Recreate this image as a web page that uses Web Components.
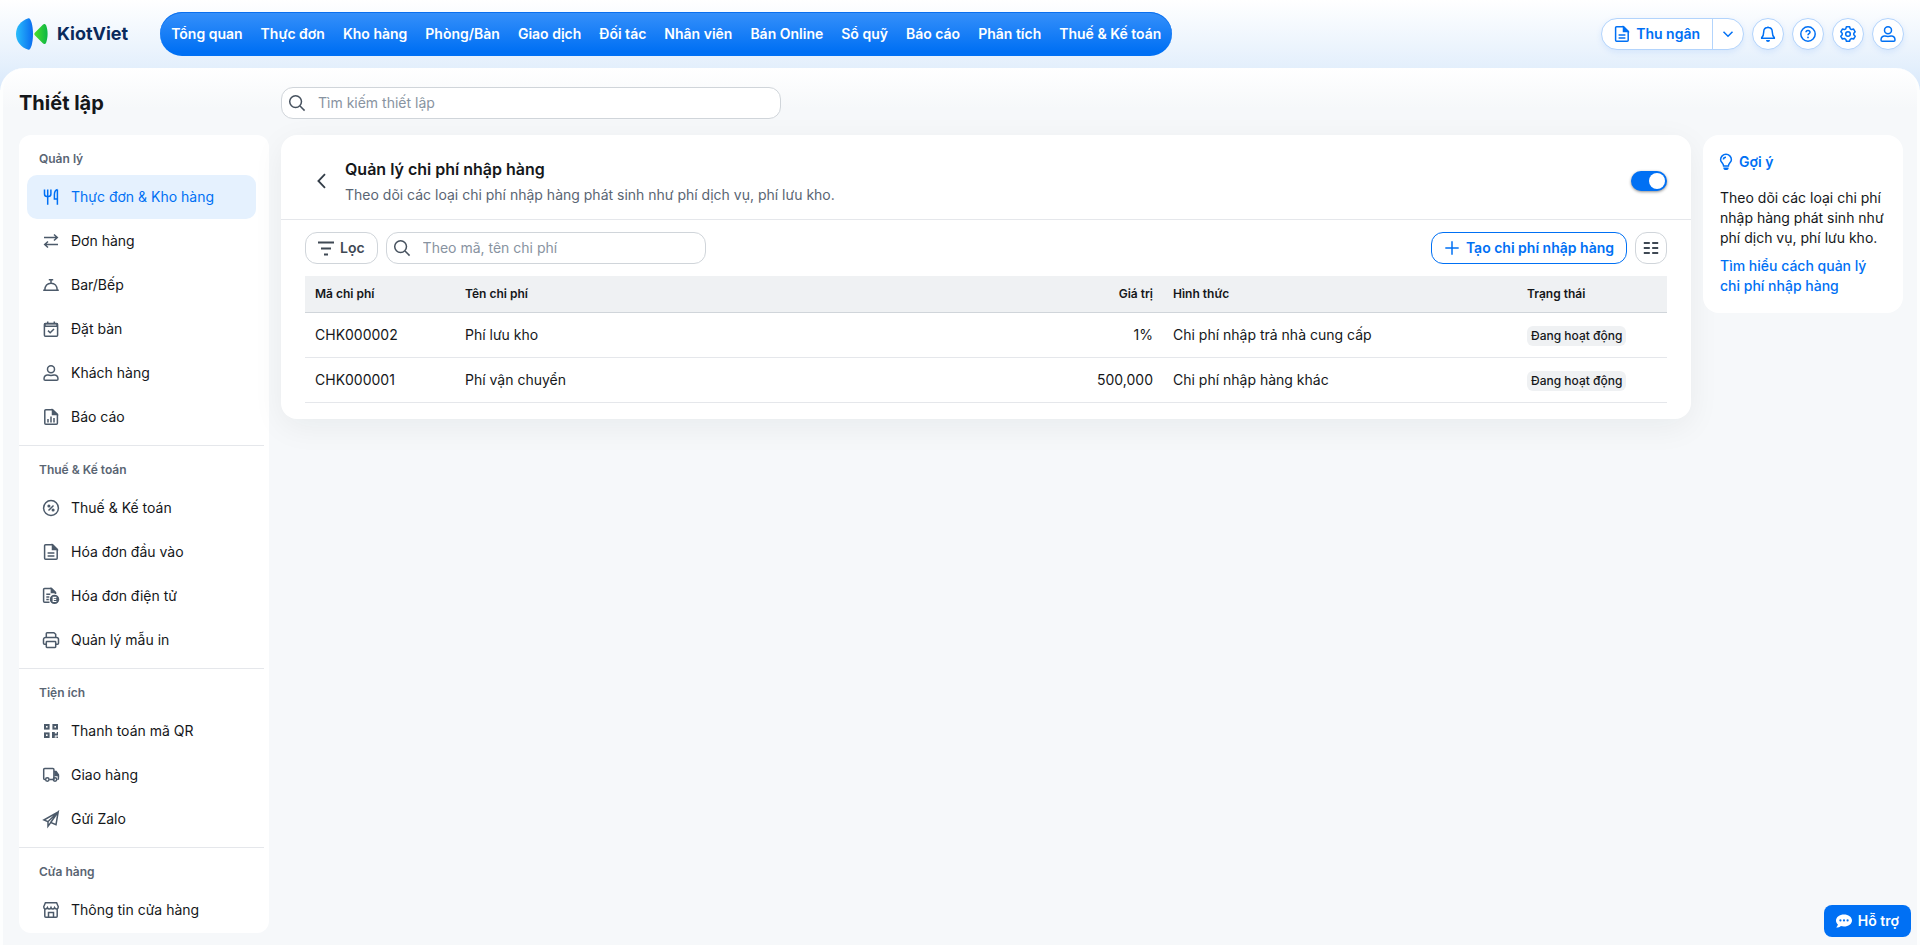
<!DOCTYPE html>
<html lang="vi">
<head>
<meta charset="utf-8">
<meta name="viewport" content="width=device-width, initial-scale=1">
<title>KiotViet - Thiết lập</title>
<style>
  :root {
    --blue: #0070f4;
    --blue-soft: #e5f1fe;
    --ink: #15171a;
    --muted: #4c5a6a;
    --line: #e5e7eb;
    --line-strong: #d0d5da;
    --surface: #f6f8fa;
    --head: #eff1f3;
  }
  html { height: 100%; }
  body {
    margin: 0;
    height: 100%;
    overflow: hidden;
    font: 14px/20px Inter, "Noto Sans", sans-serif;
    color: var(--ink);
    background: #fff;
  }
</style>
</head>
<body>
<kv-app></kv-app>

<script>
const ICONS = {
  doc: '<path d="M2.600.8h7L14.200 5.400V14.200a1 1 0 0 1-1 1H2.600a1 1 0 0 1-1-1V1.800a1 1 0 0 1 1-1z"/><path d="M9.500 1v4.500H14z" fill="currentColor"/><path d="M4.600 9h6.800M4.600 12h6.800"/>',
  chevdown: '<path d="M3.500 5.800L8 10.300l4.500-4.500"/>',
  bell: '<path d="M8 1.600c-2.700 0-4.300 2-4.300 4.500 0 3-.8 4.400-2 5.500v.7h12.600v-.7c-1.200-1.100-2-2.500-2-5.500 0-2.500-1.600-4.500-4.300-4.500zM8 .4v1"/><path d="M6 14h4a2 2 0 0 1-4 0z" fill="currentColor" stroke="none"/>',
  help: '<circle cx="8" cy="8" r="7.200"/><path d="M6 6.300C6 5 6.900 4.400 8 4.400s2 .7 2 1.800c0 1.500-2 1.500-2 3"/><circle cx="8" cy="11.400" r=".9" fill="currentColor" stroke="none"/>',
  gear: '<path d="M6.400.8h3.200l.6 2 1.400.8 2-.5 1.600 2.700-1.400 1.500v1.500l1.400 1.500-1.600 2.700-2-.5-1.400.8-.6 2H6.400l-.6-2-1.400-.8-2 .5L.8 10.300l1.400-1.500V7.300L.8 5.800l1.600-2.700 2 .5 1.400-.8z" stroke-linejoin="round"/><circle cx="8" cy="8" r="2.300"/>',
  user: '<circle cx="8" cy="4.300" r="3.500"/><path d="M1 13.900c0-2.700 1.700-4.100 4-3.900 1.800.5 4.200.5 6 0 2.300-.2 4 1.200 4 3.900 0 .7-.5 1.300-1.200 1.300H2.200c-.7 0-1.200-.6-1.200-1.300z"/>',
  utensils: '<path d="M1.500.4v4.600c0 1.500 1 2.500 2.500 2.500h1.400c1.500 0 2.500-1 2.500-2.500V.4M4.700.4v15.400M14.400.6c-2 .5-3 2.800-3 5.200v4.300h2.700M14.400.6v15.200"/>',
  swap: '<path d="M1 4.500h13M11 1.500l3.300 3-3.300 3M15 11.500H2M5 8.500l-3.300 3 3.300 3"/>',
  cloche: '<path d="M.2 13.300h15.600M1.800 13c0-4 2.600-6.800 6.200-6.800s6.200 2.800 6.200 6.800M8 6.300V3.200M5.800 2.800h4.400"/>',
  calendar: '<rect x="1.400" y="2.400" width="13.200" height="12.800" rx="1"/><path d="M2 2.800h12v2.400H2zM4.700.4v2M11.300.4v2"/><path d="M5 9.600l2.200 2.200 3.800-3.800"/>',
  report: '<path d="M2.800.8h6.800L14.400 5.400V14.200a1 1 0 0 1-1 1H2.800a1 1 0 0 1-1-1V1.800a1 1 0 0 1 1-1z"/><path d="M9.500 1v4.500H14z" fill="currentColor"/><path d="M5 10v3.400M8 7.500v5.900M11 9v4.400"/>',
  percent: '<circle cx="8" cy="8" r="7.400"/><path d="M5.500 10.500l5-5"/><circle cx="5.900" cy="6" r=".8" fill="currentColor"/><circle cx="10.100" cy="10" r=".8" fill="currentColor"/>',
  einvoice: '<path d="M6.500 14.300H1.600a1 1 0 0 1-1-1V1.600a1 1 0 0 1 1-1h6.900l3.900 3.800V6"/><path d="M8.400.8v3.800H12z" fill="currentColor"/><path d="M3.300 6.300h4M3.300 9h3M3.300 11.500h2.500"/><circle cx="11.500" cy="11.400" r="4.700" fill="currentColor" stroke="none"/><path d="M13.400 9.300H10.200v4.200h3.200M10.200 11.400h3" stroke="#fff" stroke-width="1.200"/>',
  printer: '<path d="M3.300 5V1.500a.8.8 0 0 1 .8-.8h6.800l1.800 1.600V5M3.300 12.200H1.500a1 1 0 0 1-1-1V7.500A2 2 0 0 1 2.500 5.500h11a2 2 0 0 1 2 2V11.200a1 1 0 0 1-1 1h-1.800"/><rect x="3.300" y="9.600" width="9.400" height="5.800" rx=".6"/>',
  qr: '<g stroke-width="2"><rect x="2" y="2" width="3.600" height="3.600"/><rect x="10.400" y="2" width="3.600" height="3.600"/><rect x="2" y="10.400" width="3.600" height="3.600"/></g><path d="M9 9h2.800v1.600h2V9H15v3.400h-3.200V15H9zM12.600 13.600h1V15h-1zM14 13.600h1V15h-1z" fill="currentColor" stroke="none"/>',
  truck: '<path d="M2.200 12.500H1.700a1 1 0 0 1-1-1V2.500a1 1 0 0 1 1-1h8.200a1 1 0 0 1 1 1v10H6.300M10.900 4.500h2.200l2.300 3.200v3.800a1 1 0 0 1-1 1"/><path d="M12 5.800h1l2 2.800h-3z" fill="currentColor"/><circle cx="4.300" cy="12.500" r="1.700"/><circle cx="12" cy="12.500" r="1.700"/>',
  send: '<path d="M15.200.9L.9 9l4 1.700L15.200.9 13 13.700l-5.300-2.200zM5 10.700v4.500l2.700-3.600"/>',
  store: '<path d="M2.400.8h11.200l1.700 4c0 2.500-2.800 2.900-3.700.8-.8 2-2.800 2-3.600 0-.8 2-2.800 2-3.600 0C3.500 7.700.7 7.300.7 4.800zM1.800 7v7.200a1 1 0 0 0 1 1h10.400a1 1 0 0 0 1-1V7"/><path d="M5.500 15.200v-4.800h5v4.800"/>',
  search: '<circle cx="6.600" cy="6.600" r="5.900"/><path d="M11 11l4.600 4.600"/>',
  back: '<path d="M12 1.200L5.400 8l6.600 6.800" stroke-width="1.800"/>',
  filter: '<path d="M0 2.500h16M3 8.500h10M6 14.500h4" stroke-width="1.800"/>',
  plus: '<path d="M8 1.300v13.400M1.300 8h13.400"/>',
  columns: '<path d="M.8 3h6M9.200 3h6M.8 8h6M9.200 8h6M.8 13h6M9.200 13h6" stroke-width="2"/>',
  bulb: '<path d="M5.600 12c0-2.700-3-3.600-3-6.300a5.400 5.400 0 0 1 10.800 0c0 2.700-3 3.600-3 6.300zM5.400 5.600C5.400 4.200 6.400 3.200 8 3.200"/><path d="M5.400 13.600h5.200v.6c0 1-.8 1.800-2.600 1.800s-2.600-.8-2.600-1.800z" fill="currentColor" stroke="none"/>',
  chat: '<path d="M8 1.400c4.400 0 8 2.600 8 6s-3.600 6-8 6c-1.100 0-2.200-.2-3.100-.5-1.200.9-2.700 1.600-4.700 1.700 1-1 1.500-2.100 1.700-3.100C.8 10.400 0 9 0 7.400c0-3.400 3.600-6 8-6z" fill="currentColor" stroke="none"/><g fill="#0070f4" stroke="none"><circle cx="4.400" cy="7.400" r="1.100"/><circle cx="8" cy="7.400" r="1.100"/><circle cx="11.600" cy="7.400" r="1.100"/></g>'
};

const define = (name, html, setup) => {
  const tpl = document.createElement('template');
  tpl.innerHTML = html;
  customElements.define(name, class extends HTMLElement {
    constructor() {
      super();
      this.attachShadow({ mode: 'open' }).append(tpl.content.cloneNode(true));
    }
    connectedCallback() { if (setup) setup.call(this, this.shadowRoot); }
  });
};

define('kv-icon', `
  <style>
    :host { display: flex; justify-content: center; flex: none; width: 16px; height: 16px; }
    svg { display: block; flex: none; width: 16px; height: 16px; overflow: visible; }
  </style>
  <svg viewBox="0 0 16 16" fill="none" stroke="currentColor" stroke-width="1.500" aria-hidden="true"></svg>`,
  function (root) { root.querySelector('svg').innerHTML = ICONS[this.getAttribute('name')]; });

define('kv-logo', `
  <style>
    :host { display: block; flex: none; }
    a { display: flex; align-items: center; gap: 8px; text-decoration: none; color: #0a2a5c;
        font-size: 18px; line-height: 24px; font-weight: 700; }
    svg { display: block; width: 33px; height: 34px; }
  </style>
  <a href="#">
    <svg viewBox="0 0 33 34" aria-hidden="true">
      <defs>
        <linearGradient id="b"><stop offset="0" stop-color="#29bdfb"/><stop offset="1" stop-color="#0a6cf0"/></linearGradient>
        <linearGradient id="g"><stop offset="0" stop-color="#4be02a"/><stop offset="1" stop-color="#0cb546"/></linearGradient>
      </defs>
      <path d="M12.500 1.200c2.200-.6 4.500 6.800 4.500 15.800s-2.300 16.400-4.500 15.800C5 30.500 0 24.500 0 17S5 3.500 12.500 1.200z" fill="url(#b)"/>
      <path d="M18.800 15.800l8-8c1.200-1.200 2.600-1 3.400.8 1.900 4.800 1.900 12 0 16.800-.8 1.800-2.200 2-3.400.8l-8-8a1.700 1.700 0 0 1 0-2.400z" fill="url(#g)"/>
    </svg>
    KiotViet
  </a>`);

define('kv-nav', `
  <style>
    :host { display: block; }
    nav { display: flex; align-items: center; height: 44px; padding: 0 2px; border-radius: 22px; box-sizing: border-box;
          background: linear-gradient(#3690fa, #0070f4 90%); box-shadow: inset 0 1px #0a6fee; }
    a { padding: 0 9px; color: #fff; font-weight: 600; text-decoration: none; white-space: nowrap; }
  </style>
  <nav></nav>`,
  function (root) {
    root.querySelector('nav').innerHTML = ['Tổng quan', 'Thực đơn', 'Kho hàng', 'Phòng/Bàn', 'Giao dịch', 'Đối tác',
      'Nhân viên', 'Bán Online', 'Sổ quỹ', 'Báo cáo', 'Phân tích', 'Thuế &amp; Kế toán']
      .map(t => `<a href="#">${t}</a>`).join('');
  });

define('kv-round-button', `
  <style>
    :host { display: block; flex: none; }
    button { display: grid; place-items: center; width: 32px; height: 32px; padding: 0; box-sizing: border-box;
             border: 1px solid #b3d4fc; border-radius: 50%; background: #fff; color: var(--blue);
             box-shadow: 0 2px 6px rgba(0, 112, 244, .1); }
  </style>
  <button type="button"><slot></slot></button>`,
  function (root) { root.querySelector('button').setAttribute('aria-label', this.getAttribute('label')); });

define('kv-cashier', `
  <style>
    :host { display: flex; flex: none; box-sizing: border-box; height: 32px; border: 1px solid #b3d4fc; border-radius: 16px;
            background: #fff; box-shadow: 0 2px 6px rgba(0, 112, 244, .1); }
    button { display: flex; align-items: center; gap: 6px; margin: 0; padding: 0 12px; border: 0; background: none;
             color: var(--blue); font: inherit; font-weight: 600; }
    button + button { padding: 0 7px; border-left: 1px solid #b3d4fc; }
  </style>
  <button type="button"><kv-icon name="doc"></kv-icon>Thu ngân</button>
  <button type="button" aria-label="Mở danh sách"><kv-icon name="chevdown"></kv-icon></button>`);

define('kv-header', `
  <style>
    :host { display: flex; align-items: center; box-sizing: border-box; padding: 12px 16px; }
    kv-nav { margin-left: 32px; }
    .tools { display: flex; gap: 8px; margin-left: auto; }
  </style>
  <kv-logo></kv-logo>
  <kv-nav></kv-nav>
  <div class="tools">
    <kv-cashier></kv-cashier>
    <kv-round-button label="Thông báo"><kv-icon name="bell"></kv-icon></kv-round-button>
    <kv-round-button label="Trợ giúp"><kv-icon name="help"></kv-icon></kv-round-button>
    <kv-round-button label="Cài đặt"><kv-icon name="gear"></kv-icon></kv-round-button>
    <kv-round-button label="Tài khoản"><kv-icon name="user"></kv-icon></kv-round-button>
  </div>`);

define('kv-search', `
  <style>
    :host { display: block; }
    label { display: flex; align-items: center; gap: 13px; height: 32px; padding: 0 8px 0 7px; box-sizing: border-box;
            border: 1px solid var(--line-strong); border-radius: 12px; background: #fff; color: #46515e; }
    input { flex: 1; min-width: 0; padding: 0; border: 0; outline: 0; background: none; font: inherit; color: var(--ink); }
    input::placeholder { color: #8893a1; opacity: 1; }
  </style>
  <label><kv-icon name="search"></kv-icon><input type="text"></label>`,
  function (root) {
    const input = root.querySelector('input');
    input.placeholder = this.getAttribute('placeholder');
    input.setAttribute('aria-label', input.placeholder);
  });

define('kv-menu-item', `
  <style>
    :host { display: block; }
    a { display: flex; align-items: center; gap: 12px; height: 44px; padding: 0 16px; border-radius: 10px;
        color: inherit; text-decoration: none; }
    kv-icon { color: var(--muted); }
    :host([active]) a { background: var(--blue-soft); color: var(--blue); }
    :host([active]) kv-icon { color: var(--blue); }
  </style>
  <a href="#"><slot></slot></a>`,
  function (root) {
    root.querySelector('a').insertAdjacentHTML('afterbegin', `<kv-icon name="${this.getAttribute('icon')}"></kv-icon>`);
  });

define('kv-menu-group', `
  <style>
    :host { display: block; padding: 16px 8px 6px; border-bottom: 1px solid var(--line); }
    :host(:last-of-type) { padding-bottom: 0; border-bottom: 0; }
    h2 { margin: 0 0 8px; padding: 0 12px; font-size: 12px; line-height: 16px; font-weight: 600; color: #5a6573; }
  </style>
  <h2></h2>
  <slot></slot>`,
  function (root) { root.querySelector('h2').textContent = this.getAttribute('label'); });

define('kv-sidebar', `
  <style>
    :host { display: block; box-sizing: border-box; min-height: 0; overflow: hidden; padding-right: 5px;
            border-radius: 12px; background: #fff; }
  </style>
  <kv-menu-group label="Quản lý">
    <kv-menu-item icon="utensils" active>Thực đơn &amp; Kho hàng</kv-menu-item>
    <kv-menu-item icon="swap">Đơn hàng</kv-menu-item>
    <kv-menu-item icon="cloche">Bar/Bếp</kv-menu-item>
    <kv-menu-item icon="calendar">Đặt bàn</kv-menu-item>
    <kv-menu-item icon="user">Khách hàng</kv-menu-item>
    <kv-menu-item icon="report">Báo cáo</kv-menu-item>
  </kv-menu-group>
  <kv-menu-group label="Thuế &amp; Kế toán">
    <kv-menu-item icon="percent">Thuế &amp; Kế toán</kv-menu-item>
    <kv-menu-item icon="doc">Hóa đơn đầu vào</kv-menu-item>
    <kv-menu-item icon="einvoice">Hóa đơn điện tử</kv-menu-item>
    <kv-menu-item icon="printer">Quản lý mẫu in</kv-menu-item>
  </kv-menu-group>
  <kv-menu-group label="Tiện ích">
    <kv-menu-item icon="qr">Thanh toán mã QR</kv-menu-item>
    <kv-menu-item icon="truck">Giao hàng</kv-menu-item>
    <kv-menu-item icon="send">Gửi Zalo</kv-menu-item>
  </kv-menu-group>
  <kv-menu-group label="Cửa hàng">
    <kv-menu-item icon="store">Thông tin cửa hàng</kv-menu-item>
  </kv-menu-group>`);

define('kv-switch', `
  <style>
    :host { display: block; flex: none; }
    input { appearance: none; display: flex; align-items: center; justify-content: flex-end; width: 36px; height: 20px;
            margin: 0; padding: 0 2px; box-sizing: border-box; border-radius: 10px; background: var(--blue);
            box-shadow: 0 1px 3px rgba(0, 0, 0, .45); }
    input::before { content: ""; width: 16px; height: 16px; border-radius: 50%; background: #fff; }
    input:not(:checked) { justify-content: flex-start; background: #b8c0c8; }
  </style>
  <input type="checkbox" role="switch" checked aria-label="Quản lý chi phí nhập hàng">`);

define('kv-button', `
  <style>
    :host { display: block; flex: none; }
    button { display: flex; align-items: center; justify-content: center; gap: 6px; height: 32px; margin: 0; padding: 0 12px;
             box-sizing: border-box; border: 1px solid var(--line-strong); border-radius: 12px; background: #fff;
             color: #3f4954; font: inherit; font-weight: 600; white-space: nowrap; }
    :host([primary]) button { border-color: var(--blue); color: var(--blue); }
    :host([square]) button { width: 32px; padding: 0; }
  </style>
  <button type="button"><slot></slot></button>`,
  function (root) {
    const label = this.getAttribute('label');
    if (label) root.querySelector('button').setAttribute('aria-label', label);
  });

define('kv-cost-table', `
  <style>
    :host { display: block; }
    table { width: 100%; table-layout: fixed; border-collapse: separate; border-spacing: 0; }
    .edge { width: 150px; }
    th, td { box-sizing: border-box; padding: 0 10px; text-align: left; white-space: nowrap; }
    th { height: 37px; border-bottom: 1px solid var(--line-strong); background: var(--head);
         font-size: 12px; line-height: 16px; font-weight: 600; }
    td { height: 45px; border-bottom: 1px solid var(--line); }
    .num { text-align: right; }
    .status { display: inline-block; margin-top: 1px; padding: 2px 4px; border-radius: 6px; background: var(--head);
              font-size: 12px; line-height: 16px; font-weight: 500; vertical-align: middle; }
  </style>
  <table>
    <thead>
      <tr><th class="edge">Mã chi phí</th><th>Tên chi phí</th><th class="num">Giá trị</th><th>Hình thức</th><th class="edge">Trạng thái</th></tr>
    </thead>
    <tbody>
      <tr><td>CHK000002</td><td>Phí lưu kho</td><td class="num">1%</td><td>Chi phí nhập trả nhà cung cấp</td><td><span class="status">Đang hoạt động</span></td></tr>
      <tr><td>CHK000001</td><td>Phí vận chuyển</td><td class="num">500,000</td><td>Chi phí nhập hàng khác</td><td><span class="status">Đang hoạt động</span></td></tr>
    </tbody>
  </table>`);

define('kv-cost-card', `
  <style>
    :host { display: block; border-radius: 16px; background: #fff; box-shadow: 0 8px 32px rgba(20, 30, 40, .06); }
    header { display: flex; align-items: center; gap: 16px; padding: 20px 24px 12px 32px; border-bottom: 1px solid var(--line); }
    header div { flex: 1; }
    .back { display: block; color: #333d48; }
    h2 { margin: 0 0 2px; font-size: 16px; line-height: 28px; font-weight: 600; }
    p { margin: 0 0 2px; color: #5a6573; }
    .body { padding: 12px 24px 16px; }
    .bar { display: flex; gap: 8px; margin-bottom: 12px; }
    kv-search { width: 320px; }
    .create { margin-left: auto; }
  </style>
  <header>
    <a class="back" href="#" aria-label="Quay lại"><kv-icon name="back"></kv-icon></a>
    <div>
      <h2>Quản lý chi phí nhập hàng</h2>
      <p>Theo dõi các loại chi phí nhập hàng phát sinh như phí dịch vụ, phí lưu kho.</p>
    </div>
    <kv-switch></kv-switch>
  </header>
  <div class="body">
    <div class="bar">
      <kv-button><kv-icon name="filter"></kv-icon>Lọc</kv-button>
      <kv-search placeholder="Theo mã, tên chi phí"></kv-search>
      <kv-button class="create" primary><kv-icon name="plus"></kv-icon>Tạo chi phí nhập hàng</kv-button>
      <kv-button square label="Chọn cột"><kv-icon name="columns"></kv-icon></kv-button>
    </div>
    <kv-cost-table></kv-cost-table>
  </div>`);

define('kv-tip', `
  <style>
    :host { display: block; box-sizing: border-box; padding: 17px; border-radius: 16px; background: #fff; }
    h2 { display: flex; align-items: center; gap: 7px; margin: 0 0 16px; font-size: 14px; line-height: 20px; font-weight: 600; color: var(--blue); }
    kv-icon { width: 12px; }
    p { margin: 0 0 8px; }
    a { color: var(--blue); font-weight: 500; text-decoration: none; }
  </style>
  <h2><kv-icon name="bulb"></kv-icon>Gợi ý</h2>
  <p>Theo dõi các loại chi phí nhập hàng phát sinh như phí dịch vụ, phí lưu kho.</p>
  <a href="#">Tìm hiểu cách quản lý chi phí nhập hàng</a>`);

define('kv-support', `
  <style>
    :host { position: fixed; right: 9px; bottom: 8px; }
    button { display: flex; align-items: center; gap: 6px; height: 32px; margin: 0; padding: 0 12px; border: 0;
             border-radius: 8px; background: var(--blue); color: #fff; font: inherit; font-weight: 600; }
  </style>
  <button type="button"><kv-icon name="chat"></kv-icon>Hỗ trợ</button>`);

define('kv-app', `
  <style>
    :host { display: flex; flex-direction: column; height: 100%;
            background: linear-gradient(#fff, #e3effc 68px, #d8e8fb 90px, #fff 90px); }
    main { flex: 1; min-height: 0; display: grid; grid-template: auto 1fr / 250px 1fr 200px; column-gap: 12px; box-sizing: border-box;
           padding: 0 14px 12px 16px; border: solid #fdfefe; border-width: 0 3px; border-radius: 24px 24px 0 0;
           background: linear-gradient(#fff, var(--surface) 40px); }
    h1 { margin: 0; padding: 21px 0 18px; font-size: 20px; line-height: 28px; font-weight: 700; }
    kv-search { grid-column: 2 / 4; width: 500px; margin-top: 19px; }
    kv-sidebar { grid-row: 2; }
    kv-cost-card, kv-tip { align-self: start; }
  </style>
  <kv-header></kv-header>
  <main>
    <h1>Thiết lập</h1>
    <kv-search placeholder="Tìm kiếm thiết lập"></kv-search>
    <kv-sidebar></kv-sidebar>
    <kv-cost-card></kv-cost-card>
    <kv-tip></kv-tip>
  </main>
  <kv-support></kv-support>`);
</script>
</body>
</html>
